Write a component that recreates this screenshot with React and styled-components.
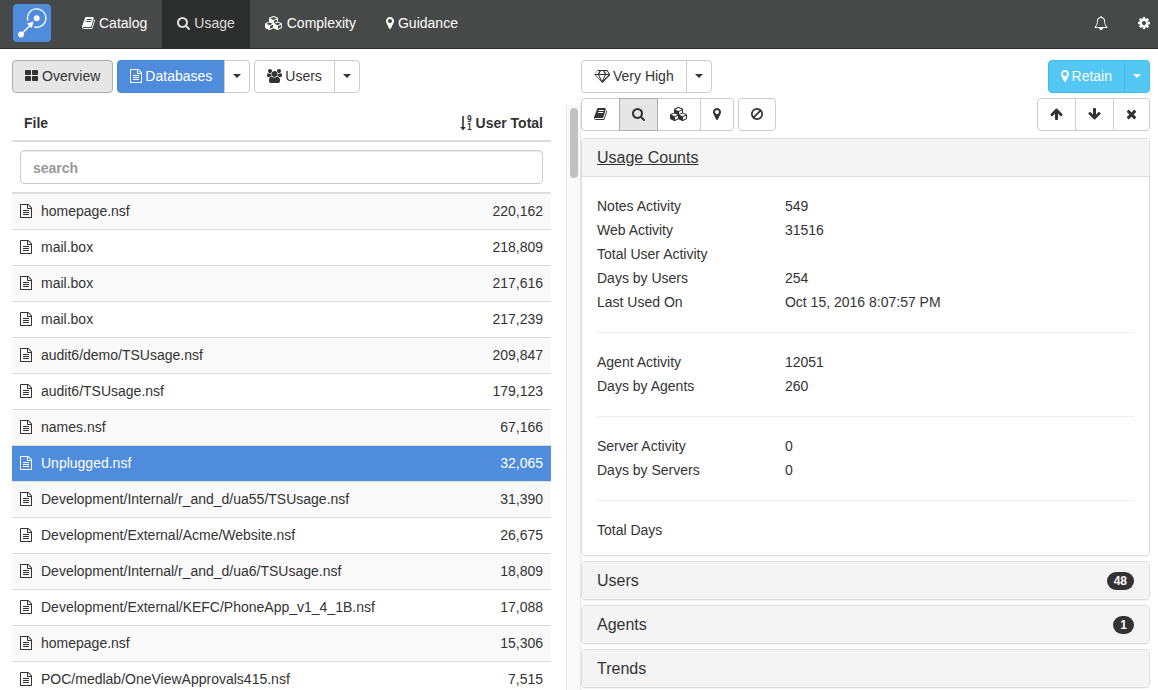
import React from 'react';
import styled, { createGlobalStyle, css } from 'styled-components';

const GlobalStyle = createGlobalStyle`
  *, *::before, *::after { box-sizing: border-box; }
  body {
    margin: 0;
    background: #fff;
    color: #333;
    font: 14px/20px "Liberation Sans", Arial, sans-serif;
  }
  button, input { font: inherit; color: inherit; margin: 0; }
`;

/* Each icon: [view box left, view box width, drawn width in px, path] on a 1792 unit high grid. */
const icons = {
  book: [64, 1664, 13, 'M1703 478q40 57 18 129l-275 906q-19 64-76.5 107.5t-122.5 43.5h-923q-77 0-148.5-53.5t-99.5-131.5q-24-67-2-127 0-4 3-27t4-37q1-8-3-21.5t-3-19.5q2-11 8-21t16.5-23.5 16.5-23.5q23-38 45-91.5t30-91.5q3-10 .5-30t-.5-28q3-11 17-28t17-23q21-36 42-92t25-90q1-9-2.5-32t.5-28q4-13 22-30.5t22-22.5q19-26 42.5-84.5t27.5-96.5q1-8-3-25.5t-2-26.5q2-8 9-18t18-23 17-21q8-12 16.5-30.5t15-35 16-36 19.5-32 26.5-23.5 36-11.5 47.5 5.5l-1 3q38-9 51-9h761q74 0 114 56t18 130l-274 906q-36 119-71.5 153.5t-128.5 34.5h-869q-27 0-38 15-11 16-1 43 24 70 144 70h923q29 0 56-15.5t35-41.5l300-987q7-22 5-57 38 15 59 43zm-1064 2q-4 13 2 22.5t20 9.5h608q13 0 25.5-9.5t16.5-22.5l21-64q4-13-2-22.5t-20-9.5h-608q-13 0-25.5 9.5t-16.5 22.5zm-83 256q-4 13 2 22.5t20 9.5h608q13 0 25.5-9.5t16.5-22.5l21-64q4-13-2-22.5t-20-9.5h-608q-13 0-25.5 9.5t-16.5 22.5z'],
  search: [64, 1664, 13, 'M1216 832q0-185-131.5-316.5t-316.5-131.5-316.5 131.5-131.5 316.5 131.5 316.5 316.5 131.5 316.5-131.5 131.5-316.5zm512 832q0 52-38 90t-90 38q-54 0-90-38l-343-342q-179 124-399 124-143 0-273.5-55.5t-225-150-150-225-55.5-273.5 55.5-273.5 150-225 225-150 273.5-55.5 273.5 55.5 225 150 150 225 55.5 273.5q0 220-124 399l343 343q37 37 37 90z'],
  cubes: [0, 2304, 18, 'M640 1632l384-192v-314l-384 164v342zm-64-454l404-173-404-173-404 173zm1088 454l384-192v-314l-384 164v342zm-64-454l404-173-404-173-404 173zm-448-293l384-165v-266l-384 164v267zm-64-379l441-189-441-189-441 189zm1088 518v416q0 36-19 67t-52 47l-448 224q-25 14-57 14t-57-14l-448-224q-4-2-7-4-2 2-7 4l-448 224q-25 14-57 14t-57-14l-448-224q-33-16-52-47t-19-67v-416q0-38 21.5-70t56.5-48l434-186v-400q0-38 21.5-70t56.5-48l448-192q23-10 50-10t50 10l448 192q35 16 56.5 48t21.5 70v400l434 186q36 16 57 48t21 70z'],
  marker: [384, 1024, 8, 'M1152 640q0-106-75-181t-181-75-181 75-75 181 75 181 181 75 181-75 75-181zm256 0q0 109-33 179l-364 774q-16 33-47.5 52t-67.5 19-67.5-19-46.5-52l-365-774q-33-70-33-179 0-212 150-362t362-150 362 150 150 362z'],
  file: [128, 1536, 12, 'M1596 380q28 28 48 76t20 88v1152q0 40-28 68t-68 28h-1344q-40 0-68-28t-28-68v-1600q0-40 28-68t68-28h896q40 0 88 20t76 48zm-444-244v376h376q-10-29-22-41l-313-313q-12-12-41-22zm384 1528v-1024h-416q-40 0-68-28t-28-68v-416h-768v1536h1280zm-1024-864q0-14 9-23t23-9h704q14 0 23 9t9 23v64q0 14-9 23t-23 9h-704q-14 0-23-9t-9-23v-64zm736 224q14 0 23 9t9 23v64q0 14-9 23t-23 9h-704q-14 0-23-9t-9-23v-64q0-14 9-23t23-9h704zm0 256q14 0 23 9t9 23v64q0 14-9 23t-23 9h-704q-14 0-23-9t-9-23v-64q0-14 9-23t23-9h704z'],
  tiles: [64, 1664, 13, 'M832 1024v384q0 52-38 90t-90 38h-512q-52 0-90-38t-38-90v-384q0-52 38-90t90-38h512q52 0 90 38t38 90zm0-768v384q0 52-38 90t-90 38h-512q-52 0-90-38t-38-90v-384q0-52 38-90t90-38h512q52 0 90 38t38 90zm896 768v384q0 52-38 90t-90 38h-512q-52 0-90-38t-38-90v-384q0-52 38-90t90-38h512q52 0 90 38t38 90zm0-768v384q0 52-38 90t-90 38h-512q-52 0-90-38t-38-90v-384q0-52 38-90t90-38h512q52 0 90 38t38 90z'],
  users: [-64, 1920, 15, 'M529 896q-162 5-265 128h-134q-82 0-138-40.5t-56-118.5q0-353 124-353 6 0 43.5 21t97.5 42.5 119 21.5q67 0 133-23-5 37-5 66 0 139 81 256zm1071 637q0 120-73 189.5t-194 69.5h-874q-121 0-194-69.5t-73-189.5q0-53 3.5-103.5t14-109 26.5-108.5 43-97.5 62-81 85.5-53.5 111.5-20q10 0 43 21.5t73 48 107 48 135 21.5 135-21.5 107-48 73-48 43-21.5q61 0 111.5 20t85.5 53.5 62 81 43 97.5 26.5 108.5 14 109 3.5 103.5zm-1024-1277q0 106-75 181t-181 75-181-75-75-181 75-181 181-75 181 75 75 181zm704 384q0 159-112.5 271.5t-271.5 112.5-271.5-112.5-112.5-271.5 112.5-271.5 271.5-112.5 271.5 112.5 112.5 271.5zm576 225q0 78-56 118.5t-138 40.5h-134q-103-123-265-128 81-117 81-256 0-29-5-66 66 23 133 23 59 0 119-21.5t97.5-42.5 43.5-21q124 0 124 353zm-128-609q0 106-75 181t-181 75-181-75-75-181 75-181 181-75 181 75 75 181z'],
  diamond: [0, 2048, 16, 'M212 768l623 665-300-665h-323zm812 772l349-772h-698zm-538-900l204-384h-262l-288 384h346zm727 793l623-665h-323zm-538-793h698l-204-384h-290zm891 0h346l-288-384h-262zm141-486l384 512q14 18 13 41.5t-17 40.5l-960 1024q-18 20-47 20t-47-20l-960-1024q-16-17-17-40.5t13-41.5l384-512q18-26 51-26h1152q33 0 51 26z'],
  ban: [128, 1536, 12, 'M1440 893q0-161-87-295l-754 753q137 89 297 89 111 0 211.5-43.5t173.5-116.5 116-174.5 43-212.5zm-999 299l755-754q-135-91-300-91-148 0-273 73t-198 199-73 274q0 162 89 299zm1223-299q0 157-61 300t-163.5 246-245 164-298.5 61-298.5-61-245-164-163.5-246-61-300 61-299.5 163.5-245.5 245-164 298.5-61 298.5 61 245 164 163.5 245.5 61 299.5z'],
  up: [64, 1664, 13, 'M1675 971q0 51-37 90l-75 75q-38 38-91 38-54 0-90-38l-294-293v704q0 52-37.5 84.5t-90.5 32.5h-128q-53 0-90.5-32.5t-37.5-84.5v-704l-294 293q-36 38-90 38t-90-38l-75-75q-38-38-38-90 0-53 38-91l651-651q35-37 90-37 54 0 91 37l651 651q37 39 37 91z'],
  down: [64, 1664, 13, 'M1675 832q0 53-37 90l-651 652q-39 37-91 37-53 0-90-37l-651-652q-38-36-38-90 0-53 38-91l74-75q39-37 91-37 53 0 90 37l294 294v-704q0-52 38-90t90-38h128q52 0 90 38t38 90v704l294-294q37-37 90-37 52 0 91 37l75 75q37 39 37 91z'],
  times: [192, 1408, 11, 'M1490 1322q0 40-28 68l-136 136q-28 28-68 28t-68-28l-294-294-294 294q-28 28-68 28t-68-28l-136-136q-28-28-28-68t28-68l294-294-294-294q-28-28-28-68t28-68l136-136q28-28 68-28t68 28l294 294 294-294q28-28 68-28t68 28l136 136q28 28 28 68t-28 68l-294 294 294 294q28 28 28 68z'],
  cog: [128, 1536, 12, 'M1152 896q0-106-75-181t-181-75-181 75-75 181 75 181 181 75 181-75 75-181zm512-109v222q0 12-8 23t-20 13l-185 28q-19 54-39 91 35 50 107 138 10 12 10 25t-9 23q-27 37-99 108t-94 71q-12 0-26-9l-138-108q-44 23-91 38-16 136-29 186-7 28-36 28h-222q-14 0-24.5-8.5t-11.5-21.5l-28-184q-49-16-90-37l-141 107q-10 9-25 9-14 0-25-11-126-114-165-168-7-10-7-23 0-12 8-23 15-21 51-66.5t54-70.5q-27-50-41-99l-183-27q-13-2-21-12.5t-8-23.5v-222q0-12 8-23t19-13l186-28q14-46 39-92-40-57-107-138-10-12-10-24 0-10 9-23 26-36 98.5-107.5t94.5-71.5q13 0 26 10l138 107q44-23 91-38 16-136 29-186 7-28 36-28h222q14 0 24.5 8.5t11.5 21.5l28 184q49 16 90 37l142-107q9-9 24-9 13 0 25 10 129 119 165 170 7 8 7 22 0 12-8 23-15 21-51 66.5t-54 70.5q26 50 41 98l183 28q13 2 21 12.5t8 23.5z'],
  bell: [0, 1792, 14, 'M912 1696q0-16-16-16-59 0-101.5-42.5t-42.5-101.5q0-16-16-16t-16 16q0 73 51.5 124.5t124.5 51.5q16 0 16-16zm-666-288h1300q-266-300-266-832 0-51-24-105t-69-103-121.5-80.5-169.5-31.5-169.5 31.5-121.5 80.5-69 103-24 105q0 532-266 832zm1482 0q0 52-38 90t-90 38h-448q0 106-75 181t-181 75-181-75-75-181h-448q-52 0-90-38t-38-90q50-42 91-88t85-119.5 74.5-158.5 50-206 19.5-260q0-152 117-282.5t307-158.5q-8-19-8-39 0-40 28-68t68-28 68 28 28 68q0 20-8 39 190 28 307 158.5t117 282.5q0 139 19.5 260t50 206 74.5 158.5 85 119.5 91 88z'],
};

const Svg = styled.svg`
  flex: none;
  display: block;
  fill: currentColor;
`;

function Icon({ name }) {
  const [left, units, width, path] = icons[name];
  return (
    <Svg width={width} height="14" viewBox={`${left} 0 ${units} 1792`} aria-hidden="true">
      <path d={path} />
    </Svg>
  );
}

const Page = styled.div`
  display: flex;
  flex-direction: column;
  height: 100vh;
  overflow: hidden;
`;

const NavBar = styled.header`
  display: flex;
  flex: none;
  align-items: stretch;
  height: 49px;
  padding: 0 8px 0 13px;
  background: #474949;
  border-bottom: 1px solid #2f3030;
  color: #fff;
`;

const Brand = styled.a`
  display: flex;
  padding: 4px 0;
  margin-right: 16px;
`;

const Nav = styled.nav`
  display: flex;
  flex: 1;
`;

const NavLink = styled.a`
  display: flex;
  align-items: center;
  gap: 4px;
  padding: 0 15px 2px;
  text-decoration: none;
  color: ${(p) => (p.$active ? '#ddd' : '#fff')};
  background: ${(p) => (p.$active ? '#2d2f2e' : 'transparent')};
`;

const NavTools = styled.div`
  display: flex;
  align-items: center;
  gap: 30px;
  padding-bottom: 3px;
`;

const NavButton = styled.button`
  padding: 0;
  border: 0;
  background: none;
  color: #fff;
`;

const Columns = styled.main`
  display: grid;
  grid-template-columns: minmax(0, 1fr) minmax(0, 1fr);
  grid-template-rows: minmax(0, 1fr);
  flex: 1;
  min-height: 0;
  padding: 11px 8px 0 12px;
`;

const Column = styled.section`
  display: flex;
  flex-direction: column;
  min-height: 0;
`;

const Toolbar = styled.div`
  display: flex;
  flex: none;
  gap: 4px;
  margin-bottom: 5px;
`;

const Spacer = styled.div`
  flex: 1;
`;

const tones = {
  plain: css`background: #fff; border-color: #ccc; color: #333;`,
  pressed: css`background: #e6e6e6; border-color: #adadad; color: #333; z-index: 1;`,
  primary: css`background: #508cdc; border-color: #4884d8; color: #fff;`,
  info: css`background: #54c7f5; border-color: #3dbdf0; color: #fff;`,
};

const Button = styled.button`
  position: relative;
  display: flex;
  align-items: center;
  gap: 4px;
  height: 33px;
  padding: 0 ${(p) => (p.$narrow ? 8 : 12)}px 1px;
  border: 1px solid;
  border-radius: 4px;
  white-space: nowrap;
  ${(p) => tones[p.$tone || 'plain']}
`;

const Group = styled.div`
  display: flex;

  ${Button} { gap: 3px; }
  ${Button}:not(:last-child) { border-top-right-radius: 0; border-bottom-right-radius: 0; }
  ${Button}:not(:first-child) { border-top-left-radius: 0; border-bottom-left-radius: 0; margin-left: -1px; }
`;

const Caret = styled.span`
  border: 4px solid transparent;
  border-top-color: currentColor;
  border-bottom: 0;
`;

const ScrollArea = styled.div`
  display: flex;
  flex: 1;
  min-height: 0;
  margin-top: 7px;
`;

const ListPane = styled.div`
  flex: 1;
  min-width: 0;
  overflow: auto;
  scrollbar-width: none;
  padding-right: 15px;
`;

const Track = styled.div`
  flex: none;
  width: 15px;
  padding: 3px;
  background: #fafafa;
  border: solid #e8e8e8;
  border-width: 0 1px;
`;

const Thumb = styled.div`
  width: 8px;
  height: 70px;
  border-radius: 4px;
  background: #c1c1c1;
`;

const Table = styled.table`
  width: 100%;
  border-collapse: separate;
  border-spacing: 0;
`;

const HeadCell = styled.th`
  height: 37px;
  padding: 0 8px 0 12px;
  text-align: ${(p) => (p.$end ? 'right' : 'left')};
  border-bottom: 2px solid #ddd;
`;

const SortLabel = styled.span`
  display: flex;
  justify-content: flex-end;
  align-items: center;
  gap: 4px;
`;

const SearchCell = styled.th`
  padding: 8px;
  border-bottom: 2px solid #ddd;
`;

const SearchInput = styled.input`
  display: block;
  width: 100%;
  height: 34px;
  padding: 7px 12px 5px;
  border: 1px solid #ccc;
  border-radius: 4px;
  background: #fff;
  box-shadow: inset 0 1px 1px rgba(0, 0, 0, 0.075);
  font-weight: 700;
  &::placeholder { color: #999; opacity: 1; }
`;

const Row = styled.tr`
  background: ${(p) => (p.$selected ? '#508cdc' : 'transparent')};
  color: ${(p) => (p.$selected ? '#fff' : '#333')};
  ${(p) => !p.$selected && css`&:nth-child(odd) { background: #f9f9f9; }`}
`;

const Cell = styled.td`
  height: 36px;
  padding: 0 8px 2px;
  border-bottom: 1px solid #ddd;
  text-align: ${(p) => (p.$end ? 'right' : 'left')};
`;

const FileName = styled.span`
  display: flex;
  align-items: center;
  gap: 9px;
`;

const Panels = styled.div`
  display: flex;
  flex-direction: column;
  flex: none;
  gap: 5px;
  margin-top: 2px;
`;

const Panel = styled.section`
  border: 1px solid #ddd;
  border-radius: 4px;
  box-shadow: 0 1px 1px rgba(0, 0, 0, 0.05);
  overflow: hidden;
`;

const PanelHead = styled.div`
  display: flex;
  align-items: center;
  justify-content: space-between;
  height: ${(p) => (p.$open ? 38 : 37)}px;
  padding: 1px 15px 0;
  background: #f4f4f4;
  border-bottom: ${(p) => (p.$open ? '1px solid #ddd' : '0')};
`;

const PanelTitle = styled.h4`
  margin: 0;
  font-size: 16px;
  font-weight: 500;
  line-height: 20px;
  text-decoration: ${(p) => (p.$open ? 'underline' : 'none')};
`;

const Badge = styled.span`
  padding: 3px 7px;
  border-radius: 10px;
  background: #333;
  color: #fff;
  font-size: 12px;
  font-weight: 700;
  line-height: 12px;
`;

const PanelBody = styled.div`
  padding: 17px 15px 13px;
`;

const Facts = styled.dl`
  display: grid;
  grid-template-columns: 35% 1fr;
  grid-auto-rows: 24px;
  align-items: center;
  margin: 0;
`;

const Term = styled.dt`
  grid-column: 1;
`;

const Value = styled.dd`
  margin: 0;
`;

const Divider = styled.hr`
  margin: 18px 0 17px;
  border: 0;
  border-top: 1px solid #eee;
`;

const files = [
  ['homepage.nsf', '220,162'],
  ['mail.box', '218,809'],
  ['mail.box', '217,616'],
  ['mail.box', '217,239'],
  ['audit6/demo/TSUsage.nsf', '209,847'],
  ['audit6/TSUsage.nsf', '179,123'],
  ['names.nsf', '67,166'],
  ['Unplugged.nsf', '32,065'],
  ['Development/Internal/r_and_d/ua55/TSUsage.nsf', '31,390'],
  ['Development/External/Acme/Website.nsf', '26,675'],
  ['Development/Internal/r_and_d/ua6/TSUsage.nsf', '18,809'],
  ['Development/External/KEFC/PhoneApp_v1_4_1B.nsf', '17,088'],
  ['homepage.nsf', '15,306'],
  ['POC/medlab/OneViewApprovals415.nsf', '7,515'],
];

const factGroups = [
  [
    ['Notes Activity', '549'],
    ['Web Activity', '31516'],
    ['Total User Activity', ''],
    ['Days by Users', '254'],
    ['Last Used On', 'Oct 15, 2016 8:07:57 PM'],
  ],
  [['Agent Activity', '12051'], ['Days by Agents', '260']],
  [['Server Activity', '0'], ['Days by Servers', '0']],
  [['Total Days', '']],
];

function Logo() {
  return (
    <svg width="38" height="38" viewBox="0 0 38 38" aria-hidden="true">
      <rect width="38" height="38" rx="4" fill="#508cdc" />
      <g fill="none" stroke="#fff">
        <path d="M14.8 16.500a9.200 9.200 0 1 1 6.500 6.500" strokeWidth="1.300" />
        <path d="M8 30.500L18 20.500" strokeWidth="1.400" />
      </g>
      <g fill="#fff">
        <circle cx="23.700" cy="14.200" r="2.900" />
        <circle cx="8" cy="30.500" r="2.900" />
        <path d="M20.500 17.600l-6.500 2 4.700 4.700z" />
      </g>
    </svg>
  );
}

function SortIcon() {
  return (
    <svg width="12" height="16" viewBox="0 0 12 16" fill="#333" aria-hidden="true">
      <path d="M2.200 1h1.600v11h2l-2.800 3.500-2.800-3.500h2z" />
      <text x="7" y="7" fontSize="8" fontFamily="DejaVu Sans Mono, monospace">9</text>
      <text x="7" y="15" fontSize="8" fontFamily="DejaVu Sans Mono, monospace">1</text>
    </svg>
  );
}

function SplitButton({ icon, label, tone, caretTone }) {
  return (
    <Group>
      <Button $tone={tone}><Icon name={icon} />{label}</Button>
      <Button $tone={caretTone} $narrow aria-label={`${label} options`}><Caret /></Button>
    </Group>
  );
}

export default function App() {
  return (
    <>
      <GlobalStyle />
      <Page>
        <NavBar>
          <Brand href="#" aria-label="Home"><Logo /></Brand>
          <Nav>
            <NavLink href="#catalog"><Icon name="book" />Catalog</NavLink>
            <NavLink href="#usage" $active aria-current="page"><Icon name="search" />Usage</NavLink>
            <NavLink href="#complexity"><Icon name="cubes" />Complexity</NavLink>
            <NavLink href="#guidance"><Icon name="marker" />Guidance</NavLink>
          </Nav>
          <NavTools>
            <NavButton aria-label="Notifications"><Icon name="bell" /></NavButton>
            <NavButton aria-label="Settings"><Icon name="cog" /></NavButton>
          </NavTools>
        </NavBar>

        <Columns>
          <Column>
            <Toolbar>
              <Button $tone="pressed"><Icon name="tiles" />Overview</Button>
              <SplitButton icon="file" label="Databases" tone="primary" />
              <SplitButton icon="users" label="Users" />
            </Toolbar>
            <ScrollArea>
              <ListPane>
                <Table>
                  <thead>
                    <tr>
                      <HeadCell scope="col">File</HeadCell>
                      <HeadCell scope="col" $end><SortLabel><SortIcon />User Total</SortLabel></HeadCell>
                    </tr>
                    <tr>
                      <SearchCell colSpan="2">
                        <SearchInput type="text" placeholder="search" aria-label="Search files" />
                      </SearchCell>
                    </tr>
                  </thead>
                  <tbody>
                    {files.map(([name, total]) => (
                      <Row key={name + total} $selected={name === 'Unplugged.nsf'}>
                        <Cell><FileName><Icon name="file" />{name}</FileName></Cell>
                        <Cell $end>{total}</Cell>
                      </Row>
                    ))}
                  </tbody>
                </Table>
              </ListPane>
              <Track><Thumb /></Track>
            </ScrollArea>
          </Column>

          <Column>
            <Toolbar>
              <SplitButton icon="diamond" label="Very High" />
              <Spacer />
              <SplitButton icon="marker" label="Retain" tone="info" caretTone="info" />
            </Toolbar>
            <Toolbar>
              <Group>
                <Button aria-label="Catalog"><Icon name="book" /></Button>
                <Button aria-label="Usage" $tone="pressed"><Icon name="search" /></Button>
                <Button aria-label="Complexity"><Icon name="cubes" /></Button>
                <Button aria-label="Guidance"><Icon name="marker" /></Button>
              </Group>
              <Button aria-label="Clear"><Icon name="ban" /></Button>
              <Spacer />
              <Group>
                <Button aria-label="Previous"><Icon name="up" /></Button>
                <Button aria-label="Next"><Icon name="down" /></Button>
                <Button aria-label="Close"><Icon name="times" /></Button>
              </Group>
            </Toolbar>
            <Panels>
              <Panel>
                <PanelHead $open><PanelTitle $open>Usage Counts</PanelTitle></PanelHead>
                <PanelBody>
                  {factGroups.map((group, i) => (
                    <React.Fragment key={group[0][0]}>
                      {i > 0 && <Divider />}
                      <Facts>
                        {group.map(([term, value]) => (
                          <React.Fragment key={term}>
                            <Term>{term}</Term>
                            <Value>{value}</Value>
                          </React.Fragment>
                        ))}
                      </Facts>
                    </React.Fragment>
                  ))}
                </PanelBody>
              </Panel>
              <Panel><PanelHead><PanelTitle>Users</PanelTitle><Badge>48</Badge></PanelHead></Panel>
              <Panel><PanelHead><PanelTitle>Agents</PanelTitle><Badge>1</Badge></PanelHead></Panel>
              <Panel><PanelHead><PanelTitle>Trends</PanelTitle></PanelHead></Panel>
            </Panels>
          </Column>
        </Columns>
      </Page>
    </>
  );
}
